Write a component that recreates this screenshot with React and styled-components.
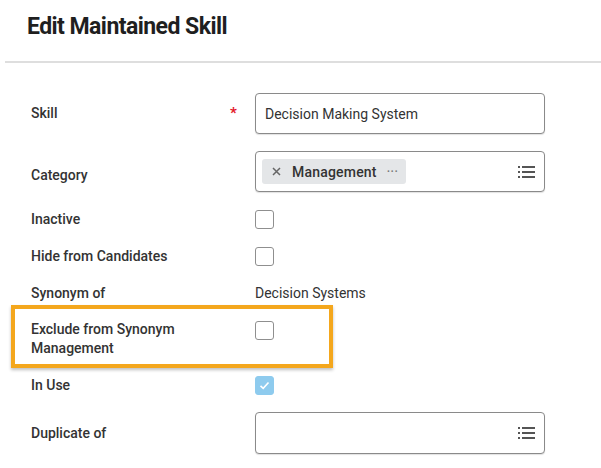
import React from "react";
import styled, { createGlobalStyle } from "styled-components";

const Global = createGlobalStyle`
  html, body { margin: 0; padding: 0; background: #fff; }
  body { font-family: Roboto, "Liberation Sans", Arial, sans-serif; color: #333; }
`;

const Page = styled.div`
  width: 601px;
  height: 468px;
  overflow: hidden;
  background: #fff;
`;

const Header = styled.div`
  height: 61px;
  padding-left: 27px;
  box-sizing: border-box;
  display: flex;
  align-items: flex-start;
`;

const Title = styled.h1`
  margin: 13px 0 0;
  font-size: 23px;
  line-height: 28px;
  font-weight: 700;
  color: #1f1f1f;
  letter-spacing: -0.55px;
`;

const Divider = styled.div`
  margin-left: 5px;
  height: 2px;
  background: #dedede;
`;

const Form = styled.div`
  padding: 30px 0 0 31px;
  display: flex;
  flex-direction: column;
  gap: 17px;
`;

const Row = styled.div`
  position: relative;
  display: grid;
  grid-template-columns: 195px 29px 290px;
  align-items: ${(p) => (p.$top ? "start" : "center")};
  min-height: ${(p) => p.$h || 20}px;
`;

const Label = styled.div`
  font-size: 14px;
  font-weight: 500;
  line-height: 19px;
  color: #333;
  max-width: 170px;
  transform: translateY(${(p) => p.$shift || 0}px);
`;

const Required = styled.span`
  color: #e3172a;
  font-size: 15px;
  font-weight: 700;
  line-height: 1;
  padding-left: 4px;
`;

const Empty = styled.span``;

const Input = styled.div`
  box-sizing: border-box;
  height: ${(p) => p.$h || 41}px;
  border: 1px solid #8a8a8a;
  border-radius: 4px;
  box-shadow: 0 1px 1px rgba(0, 0, 0, 0.12);
  display: flex;
  align-items: center;
  padding: 0 9px 0 ${(p) => (p.$chip ? 6 : 9)}px;
  font-size: 14px;
  color: #333;
  background: #fff;
`;

const InputText = styled.span`
  flex: 1;
`;

const Chip = styled.div`
  display: flex;
  align-items: center;
  height: 25px;
  width: 144px;
  box-sizing: border-box;
  background: #e4e6e8;
  border-radius: 3px;
  padding: 0 8px 0 10px;
  font-size: 14px;
  font-weight: 500;
  color: #333;
  letter-spacing: 0.2px;
`;

const ChipX = styled.svg`
  flex: none;
  margin-right: 11px;
`;

const ChipDots = styled.span`
  color: #777;
  margin-left: 10px;
  font-size: 12px;
  letter-spacing: 0.5px;
`;

const Spacer = styled.div`
  flex: 1;
`;

const Checkbox = styled.div`
  box-sizing: border-box;
  width: 19px;
  height: 19px;
  border-radius: 3px;
  border: 1px solid ${(p) => (p.$checked ? "#8ecbee" : "#8f8f8f")};
  background: ${(p) => (p.$checked ? "#8ecbee" : "#fff")};
  display: flex;
  align-items: center;
  justify-content: center;
  margin-top: ${(p) => p.$mt || 0}px;
`;

const Value = styled.div`
  font-size: 14px;
  color: #333;
`;

const Highlight = styled.div`
  position: absolute;
  left: -20px;
  top: -15px;
  width: 322px;
  height: 63px;
  box-sizing: border-box;
  border: 4px solid #f4a71d;
  box-shadow: 0 2px 3px rgba(0, 0, 0, 0.25);
  pointer-events: none;
`;

const ListIcon = () => (
  <svg width="17" height="14" viewBox="0 0 17 14">
    <g fill="#555">
      <rect x="0" y="1" width="2" height="2" />
      <rect x="0" y="6" width="2" height="2" />
      <rect x="0" y="11" width="2" height="2" />
      <rect x="4" y="1" width="13" height="2" />
      <rect x="4" y="6" width="13" height="2" />
      <rect x="4" y="11" width="13" height="2" />
    </g>
  </svg>
);

const Check = () => (
  <svg width="11" height="9" viewBox="0 0 11 9">
    <path d="M1.5 4.8 L4.2 7.3 L9.5 1.5" fill="none" stroke="#fff" strokeWidth="1.6" />
  </svg>
);

export default function App() {
  return (
    <Page>
      <Global />
      <Header>
        <Title>Edit Maintained Skill</Title>
      </Header>
      <Divider />
      <Form>
        <Row $h={41}>
          <Label>Skill</Label>
          <Required>*</Required>
          <Input>
            <InputText>Decision Making System</InputText>
          </Input>
        </Row>
        <Row $h={41}>
          <Label $shift={4}>Category</Label>
          <Empty />
          <Input $chip>
            <Chip>
              <ChipX width="9" height="9" viewBox="0 0 9 9">
                <path d="M1 1 L8 8 M8 1 L1 8" stroke="#666" strokeWidth="1.5" />
              </ChipX>
              Management
              <ChipDots>···</ChipDots>
            </Chip>
            <Spacer />
            <ListIcon />
          </Input>
        </Row>
        <Row>
          <Label>Inactive</Label>
          <Empty />
          <Checkbox />
        </Row>
        <Row>
          <Label>Hide from Candidates</Label>
          <Empty />
          <Checkbox />
        </Row>
        <Row>
          <Label>Synonym of</Label>
          <Empty />
          <Value>Decision Systems</Value>
        </Row>
        <Row $h={38} $top>
          <Label>Exclude from Synonym Management</Label>
          <Empty />
          <Checkbox $mt={1} />
          <Highlight />
        </Row>
        <Row>
          <Label>In Use</Label>
          <Empty />
          <Checkbox $checked>
            <Check />
          </Checkbox>
        </Row>
        <Row $h={42}>
          <Label>Duplicate of</Label>
          <Empty />
          <Input $h={42}>
            <Spacer />
            <ListIcon />
          </Input>
        </Row>
      </Form>
    </Page>
  );
}
